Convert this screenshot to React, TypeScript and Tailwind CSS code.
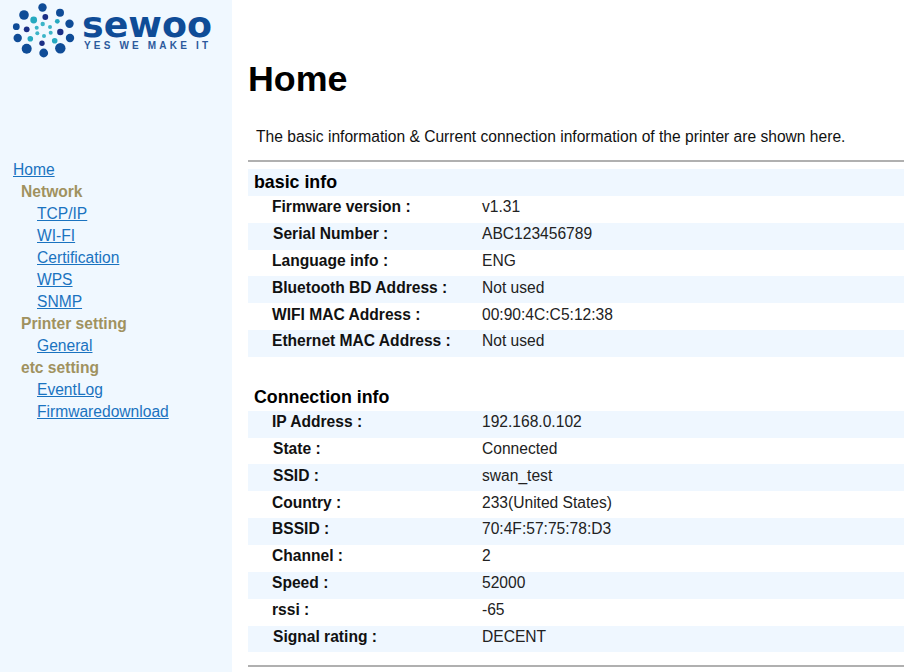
const basicRows = [
  { label: "Firmware version :", value: "v1.31" },
  { label: "Serial Number :", value: "ABC123456789", nudge: true },
  { label: "Language info :", value: "ENG" },
  { label: "Bluetooth BD Address :", value: "Not used" },
  { label: "WIFI MAC Address :", value: "00:90:4C:C5:12:38" },
  { label: "Ethernet MAC Address :", value: "Not used" },
];

const connectionRows = [
  { label: "IP Address :", value: "192.168.0.102" },
  { label: "State :", value: "Connected", nudge: true },
  { label: "SSID :", value: "swan_test", nudge: true },
  { label: "Country :", value: "233(United States)" },
  { label: "BSSID :", value: "70:4F:57:75:78:D3" },
  { label: "Channel :", value: "2" },
  { label: "Speed :", value: "52000" },
  { label: "rssi :", value: "-65" },
  { label: "Signal rating :", value: "DECENT", nudge: true },
];

const dots = [
  // outer ring
  [42.5, 7.5, 4.2, "#0f4c97"],
  [24, 15, 4.8, "#0f4c97"],
  [60, 12.7, 4, "#0f4c97"],
  [69.5, 23.7, 4.2, "#0f4c97"],
  [16.3, 26.7, 3.4, "#0f4c97"],
  [17.7, 38, 4.2, "#0f4c97"],
  [70, 38, 4.2, "#0f4c97"],
  [26.7, 48.7, 5, "#0f4c97"],
  [60.3, 48.3, 5.2, "#0f4c97"],
  [43.7, 53, 4.4, "#0f4c97"],
  // middle ring
  [45.3, 17, 2.9, "#1b2f86"],
  [26.7, 29.3, 2.9, "#1b2f86"],
  [60.3, 32, 3.2, "#1b2f86"],
  [42, 43.3, 2.7, "#1b2f86"],
  // teal
  [33.7, 20, 3.4, "#25a9c0"],
  [57.3, 21.3, 2.4, "#25a9c0"],
  [30.3, 38.7, 2.8, "#25a9c0"],
  [54.7, 40.7, 2.8, "#25a9c0"],
  [42.7, 24, 2.2, "#3bb5c8"],
  [36.7, 27.7, 2, "#3bb5c8"],
  [50, 27, 2, "#3bb5c8"],
  [37.3, 33.3, 2, "#3bb5c8"],
  [44, 36, 2, "#3bb5c8"],
  [50.7, 32.7, 2, "#3bb5c8"],
] as const;

function Logo() {
  return (
    <svg width="232" height="60" viewBox="0 0 232 60" className="block">
      {dots.map(([cx, cy, r, fill], i) => (
        <circle key={i} cx={cx} cy={cy} r={r} fill={fill} />
      ))}
      <text
        x="82"
        y="37"
        textLength="130"
        lengthAdjust="spacingAndGlyphs"
        fontFamily="'DejaVu Sans', sans-serif"
        fontWeight="700"
        fontSize="36"
        fill="#0f4c97"
      >
        sewoo
      </text>
      <text
        x="84"
        y="49"
        textLength="124"
        fontFamily="'Liberation Sans', sans-serif"
        fontWeight="700"
        fontSize="10"
        fill="#2c5a9c"
      >
        YES WE MAKE IT
      </text>
    </svg>
  );
}

function NavLink({ children, top }: { children: string; top?: boolean }) {
  return (
    <div className={top ? "h-[22px] pl-[13px] leading-[22px]" : "h-[22px] pl-[37px] leading-[22px]"}>
      <a href="#" className="text-[#1a73c0] underline">
        {children}
      </a>
    </div>
  );
}

function NavGroup({ children }: { children: string }) {
  return <div className="h-[22px] pl-[21px] font-bold leading-[22px] text-[#a0925f]">{children}</div>;
}

function InfoTable({
  title,
  rows,
  bandTitle,
}: {
  title: string;
  rows: { label: string; value: string; nudge?: boolean }[];
  bandTitle?: boolean;
}) {
  // the stripes run from the title row when it is tinted, otherwise from the first data row
  const bandIndex = bandTitle ? 1 : 0;
  return (
    <div>
      <div className={bandTitle ? "h-[26.86px] bg-[#eff7ff] pl-[6px] text-[17.8px] font-bold leading-[26px] text-black" : "h-[26.86px] pl-[6px] text-[17.8px] font-bold leading-[26px] text-black"}>
        {title}
      </div>
      {rows.map((row, i) => (
        <div
          key={row.label}
          className={i % 2 === bandIndex ? "flex h-[26.86px] items-center bg-[#eff7ff] pb-[5px]" : "flex h-[26.86px] items-center bg-white pb-[5px]"}
        >
          <div className={row.nudge ? "w-[234px] pl-[25px] font-bold text-[#111]" : "w-[234px] pl-[24px] font-bold text-[#111]"}>
            {row.label}
          </div>
          <div className="text-[#222]">{row.value}</div>
        </div>
      ))}
    </div>
  );
}

export default function App() {
  return (
    <div className="flex h-[672px] w-[909px] overflow-hidden bg-white font-['Liberation_Sans',Arial,sans-serif] text-[15.6px]">
      <aside className="h-full w-[232px] shrink-0 bg-[#f0f8ff]">
        <Logo />
        <nav className="pt-[98.5px]">
          <NavLink top>Home</NavLink>
          <NavGroup>Network</NavGroup>
          <NavLink>TCP/IP</NavLink>
          <NavLink>WI-FI</NavLink>
          <NavLink>Certification</NavLink>
          <NavLink>WPS</NavLink>
          <NavLink>SNMP</NavLink>
          <NavGroup>Printer setting</NavGroup>
          <NavLink>General</NavLink>
          <NavGroup>etc setting</NavGroup>
          <NavLink>EventLog</NavLink>
          <NavLink>Firmwaredownload</NavLink>
        </nav>
      </aside>
      <main className="w-[672px] pl-[16px]">
        <h1 className="pt-[58px] text-[35.8px] font-bold leading-[42px] text-black">Home</h1>
        <p className="pl-[8px] pt-[28px] leading-[18px] text-[#111]">
          The basic information &amp; Current connection information of the printer are shown here.
        </p>
        <hr className="mt-[14px] border-t-2 border-[#b0b0b0]" />
        <div className="pt-[7px]">
          <InfoTable title="basic info" rows={basicRows} bandTitle />
        </div>
        <div className="pt-[26.86px]">
          <InfoTable title="Connection info" rows={connectionRows} />
        </div>
        <hr className="mt-[13px] border-t-2 border-[#b0b0b0]" />
      </main>
    </div>
  );
}
